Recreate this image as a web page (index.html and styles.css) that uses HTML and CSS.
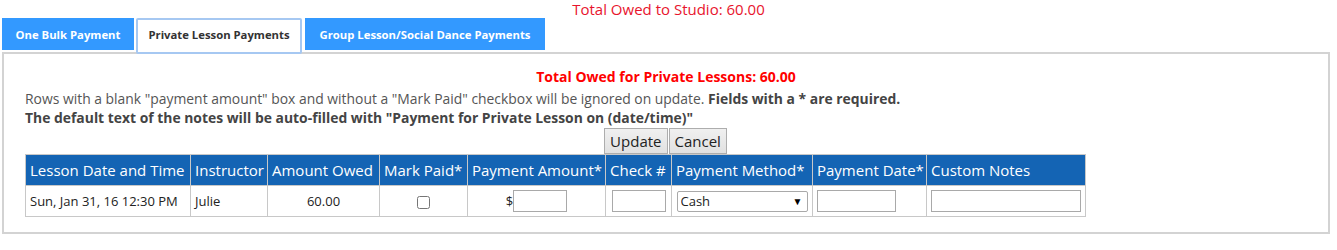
FILE: index.html
```html
<!DOCTYPE html>
<html>
<head>
<meta charset="utf-8">
<link rel="stylesheet" href="styles.css">
</head>
<body>
<div class="studio-total">Total Owed to Studio: 60.00</div>
<div class="tabs">
  <div class="tab tab-bulk">One Bulk Payment</div>
  <div class="tab tab-active">Private Lesson Payments</div>
  <div class="tab tab-group">Group Lesson/Social Dance Payments</div>
</div>
<div class="panel">
  <div class="panel-total">Total Owed for Private Lessons: 60.00</div>
  <div class="note">Rows with a blank "payment amount" box and without a "Mark Paid" checkbox will be ignored on update. <b>Fields with a * are required.</b></div>
  <div class="note"><b>The default text of the notes will be auto-filled with "Payment for Private Lesson on (date/time)"</b></div>
  <div class="actions"><button class="btn">Update</button><button class="btn">Cancel</button></div>
  <table class="grid">
    <thead>
      <tr>
        <th class="c1">Lesson Date and Time</th>
        <th class="c2">Instructor</th>
        <th class="c3">Amount Owed</th>
        <th class="c4">Mark Paid*</th>
        <th class="c5">Payment Amount*</th>
        <th class="c6">Check #</th>
        <th class="c7">Payment Method*</th>
        <th class="c8">Payment Date*</th>
        <th class="c9">Custom Notes</th>
      </tr>
    </thead>
    <tbody>
      <tr>
        <td>Sun, Jan 31, 16 12:30 PM</td>
        <td>Julie</td>
        <td class="center">60.00</td>
        <td class="center"><input type="checkbox" class="chk"></td>
        <td class="center"><span class="dollar">$</span><input type="text" class="in in-amount"></td>
        <td class="center"><input type="text" class="in in-check"></td>
        <td class="center"><span class="sel-wrap"><select class="sel"><option>Cash</option></select></span></td>
        <td><input type="text" class="in in-date"></td>
        <td class="center"><input type="text" class="in in-notes"></td>
      </tr>
    </tbody>
  </table>
</div>
</body>
</html>
```
FILE: styles.css
```css
html, body {
  margin: 0;
  padding: 0;
  background: #fff;
  font-family: "Open Sans", "Noto Sans", sans-serif;
}

.studio-total {
  text-align: center;
  color: #e8142d;
  font-size: 15px;
  line-height: 18px;
  height: 18px;
}

.tabs {
  display: flex;
  align-items: flex-start;
  height: 34px;
  margin-left: 2px;
}

.tab {
  box-sizing: border-box;
  height: 32px;
  font-size: 11.3px;
  font-weight: 700;
  display: flex;
  align-items: center;
  justify-content: center;
  color: #fff;
  background: #3399ff;
}

.tab-bulk {
  width: 132px;
  margin-right: 2px;
}

.tab-active {
  position: relative;
  z-index: 1;
  width: 166px;
  height: 36px;
  padding-bottom: 4px;
  background: #fff;
  color: #333;
  border: 2px solid #a6c8f2;
  border-radius: 2px;
  margin-right: 3px;
}

.tab-group {
  width: 240px;
}

.panel {
  box-sizing: border-box;
  margin: 0 7px 0 2px;
  border: 2px solid #d3d3d3;
  padding: 13px 0 15px 21px;
  color: #555;
  font-size: 13.9px;
}

.panel-total {
  text-align: center;
  color: #ff0000;
  font-weight: 700;
  font-size: 14px;
  line-height: 20px;
  margin: 0 0 2px -21px;
}

.note {
  line-height: 19px;
}

.note b {
  font-weight: 700;
  color: #444;
}

.actions {
  display: flex;
  justify-content: center;
  margin: 1px 0 0 -21px;
}

.btn {
  box-sizing: border-box;
  height: 26px;
  padding: 0 5px;
  font-family: inherit;
  font-size: 15px;
  color: #222;
  background: linear-gradient(#f0f0f0, #e1e1e1);
  border: 1px solid #adadad;
  border-radius: 0;
  margin-right: 1px;
}

.grid {
  border-collapse: collapse;
  table-layout: fixed;
  width: 1061px;
}

.grid th {
  box-sizing: border-box;
  background: #1464b4;
  color: #fff;
  font-weight: 400;
  font-size: 15px;
  text-align: left;
  height: 31px;
  padding: 0 4px;
  border: 1px solid #c8c8c8;
  white-space: nowrap;
  overflow: hidden;
}

.grid td {
  height: 30px;
  padding: 0 4px;
  font-size: 13px;
  color: #222;
  border: 1px solid #c8c8c8;
  white-space: nowrap;
}

.grid td.center {
  text-align: center;
}

.c1 { width: 165px; }
.c2 { width: 77px; }
.c3 { width: 112px; }
.c4 { width: 88px; }
.c5 { width: 138px; }
.c6 { width: 66px; }
.c7 { width: 141px; }
.c8 { width: 114px; }
.c9 { width: 159px; }

.chk {
  width: 13px;
  height: 13px;
  margin: 0;
  vertical-align: middle;
}

.dollar {
  vertical-align: middle;
}

.in {
  box-sizing: border-box;
  height: 22px;
  border: 1px solid #a9a9a9;
  padding: 0 2px;
  vertical-align: middle;
  font-family: inherit;
  font-size: 13px;
}

.in-amount { width: 54px; }
.in-check { width: 54px; }
.in-date { width: 79px; }
.in-notes { width: 150px; }

.sel-wrap {
  position: relative;
  display: inline-block;
  vertical-align: middle;
}

.sel-wrap::after {
  content: "\25BC";
  position: absolute;
  right: 5px;
  top: 3px;
  font-size: 10px;
  color: #000;
  pointer-events: none;
}

.sel {
  -webkit-appearance: none;
  appearance: none;
  box-sizing: border-box;
  width: 131px;
  height: 21px;
  border: 1px solid #a9a9a9;
  border-radius: 2px;
  background: #fff;
  padding: 0 3px;
  font-family: inherit;
  font-size: 13px;
  color: #222;
  display: block;
}
```
